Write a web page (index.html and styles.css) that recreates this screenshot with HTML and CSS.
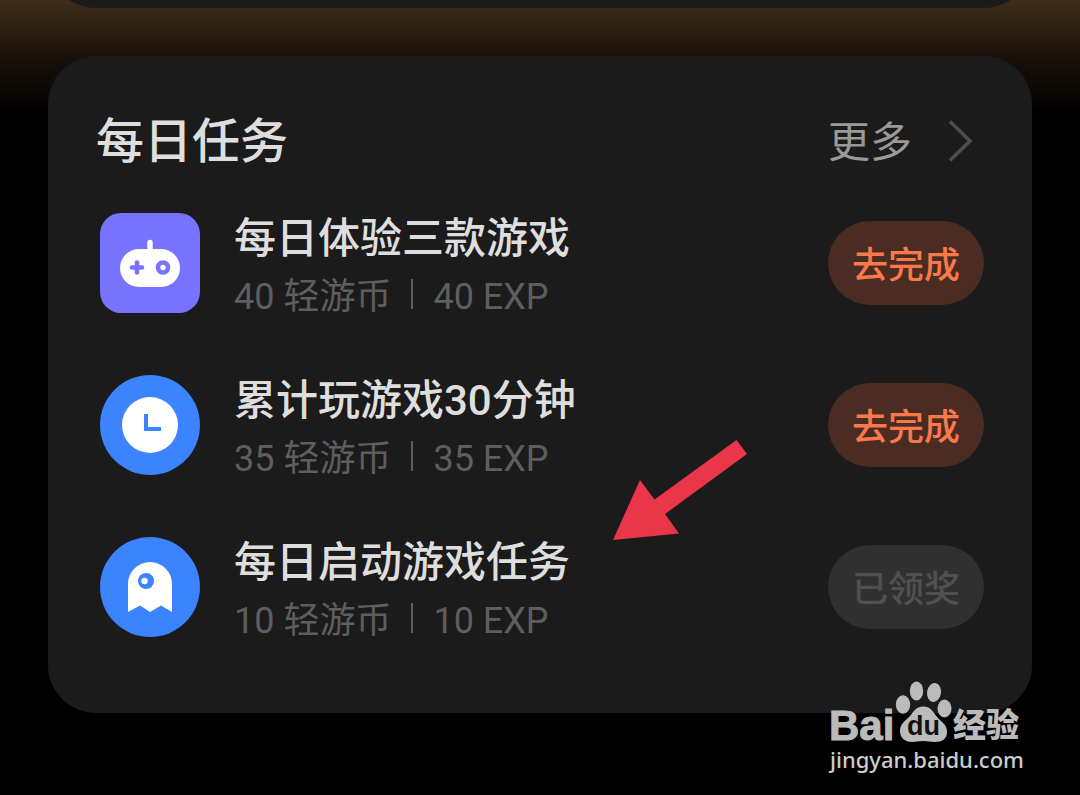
FILE: index.html
```html
<!DOCTYPE html>
<html lang="zh-CN">
<head>
<meta charset="utf-8">
<meta name="viewport" content="width=device-width, initial-scale=1">
<title>每日任务</title>
<link rel="stylesheet" href="styles.css">
</head>
<body>
<div class="page">
  <div class="previous-card"></div>
  <main class="card">
    <header class="card-header">
      <h1 class="card-title">每日任务</h1>
      <a class="more" href="#more">更多
        <svg class="chevron" viewBox="0 0 26 42" aria-hidden="true"><path d="M2 1.500 22 21 2 40.500" fill="none" stroke="#4d4d4d" stroke-width="3.600"/></svg>
      </a>
    </header>
    <ul class="tasks">
      <li class="task">
        <svg class="task-icon" viewBox="0 0 100 100" aria-hidden="true">
          <rect width="100" height="100" rx="21" fill="#7773ff"/>
          <rect x="20" y="36" width="60" height="38" rx="19" fill="#fff"/>
          <path d="M50 29.500V40" stroke="#fff" stroke-width="5.400" stroke-linecap="round"/>
          <path d="M32 54.500H42M37 49.500V59.500" stroke="#7773ff" stroke-width="4.600" stroke-linecap="round"/>
          <circle cx="63" cy="54.500" r="5" fill="none" stroke="#7773ff" stroke-width="4.600"/>
        </svg>
        <div class="task-text">
          <h2 class="task-title">每日体验三款游戏</h2>
          <p class="reward"><span>40 轻游币</span><span class="divider"></span><span>40 EXP</span></p>
        </div>
        <button class="action" type="button">去完成</button>
      </li>
      <li class="task">
        <svg class="task-icon" viewBox="0 0 100 100" aria-hidden="true">
          <circle cx="50" cy="50" r="50" fill="#3c83ff"/>
          <circle cx="50" cy="50" r="28" fill="#fff"/>
          <path d="M46 39V54H61" fill="none" stroke="#3c83ff" stroke-width="4"/>
        </svg>
        <div class="task-text">
          <h2 class="task-title">累计玩游戏30分钟</h2>
          <p class="reward"><span>35 轻游币</span><span class="divider"></span><span>35 EXP</span></p>
        </div>
        <button class="action" type="button">去完成</button>
      </li>
      <li class="task">
        <svg class="task-icon" viewBox="0 0 100 100" aria-hidden="true">
          <circle cx="50" cy="50" r="50" fill="#3c83ff"/>
          <path d="M28 75V47a22 22 0 0 1 44 0V75L61 68.500 50 75 40 68.500Z" fill="#fff"/>
          <circle cx="46" cy="44" r="8" fill="#3c83ff"/>
          <circle cx="44.500" cy="44" r="3.200" fill="#fff"/>
        </svg>
        <div class="task-text">
          <h2 class="task-title">每日启动游戏任务</h2>
          <p class="reward"><span>10 轻游币</span><span class="divider"></span><span>10 EXP</span></p>
        </div>
        <button class="action action-done" type="button" disabled>已领奖</button>
      </li>
    </ul>
  </main>
  <svg class="arrow" viewBox="0 0 134 100" aria-hidden="true"><path d="M0 100 27 40 41.500 59.500 123.500 0 134 14 52 74 66 93.500Z" fill="#ea3649"/></svg>
  <div class="watermark">
    <svg class="watermark-logo" viewBox="0 0 194 64" role="img" aria-label="Baidu 经验">
      <text class="logo-latin" x="-1" y="59">Bai</text>
      <ellipse cx="73" cy="23.500" rx="7.200" ry="9.200"/>
      <ellipse cx="86.500" cy="10" rx="6.700" ry="9.500"/>
      <ellipse cx="104" cy="11.500" rx="7" ry="9.500" transform="rotate(8 104 11.500)"/>
      <ellipse cx="114.500" cy="27.500" rx="7" ry="9"/>
      <path d="M93.500 25.500C101 25.500 103 31 107 36 111 41 117 43 117 51 117 58 112 61 105 61 100 61 98 60 93.500 60 89 60 86 61 82 61 75 61 70 57 70 50 70 43 75 40 79 36 83 32 85 25.500 93.500 25.500Z"/>
      <text class="logo-du" x="77" y="54">du</text>
      <text class="logo-cjk" x="123" y="56">经验</text>
    </svg>
    <span class="watermark-url">jingyan.baidu.com</span>
  </div>
</div>
</body>
</html>
```
FILE: styles.css
```css
* {
  box-sizing: border-box;
}

body {
  margin: 0;
  background: #000;
  color: #dedede;
  font-family: Roboto, "Noto Sans CJK SC", sans-serif;
}

.page {
  position: relative;
  min-height: 100vh;
  padding: 0 48px 82px;
  background: linear-gradient(#402d19 0, #1b120a 56px, #000 112px);
}

.previous-card {
  height: 8px;
  overflow: hidden;
  position: relative;
}

.previous-card::before {
  content: "";
  position: absolute;
  inset: -92px 0 0;
  border-radius: 48px;
  background: #1b1b1b;
}

.card {
  margin-top: 48px;
  padding: 48px 48px 76px;
  border-radius: 48px;
  background: #1b1b1b;
}

.card-header {
  display: flex;
  align-items: center;
  justify-content: space-between;
  height: 76px;
}

.card-title {
  margin: 0;
  font-size: 48px;
  font-weight: 500;
  line-height: 72px;
}

.more {
  display: flex;
  align-items: center;
  gap: 36px;
  padding: 2px 10px 0 0;
  color: #999;
  font-size: 42px;
  line-height: 72px;
  text-decoration: none;
}

.chevron {
  width: 26px;
  height: 42px;
  margin-bottom: 4px;
}

.tasks {
  display: grid;
  gap: 62px;
  margin: 33px 0 0;
  padding: 0 0 0 4px;
  list-style: none;
}

.task {
  display: flex;
  align-items: center;
  height: 100px;
}

.task-icon {
  flex: none;
  width: 100px;
  height: 100px;
}

.task-text {
  flex: 1;
  padding: 8px 0 0 34px;
}

.task-title {
  margin: 0;
  font-size: 42px;
  font-weight: 500;
  line-height: 60px;
}

.reward {
  display: flex;
  align-items: center;
  gap: 20px;
  margin: 0;
  color: #5e5e5e;
  font-size: 36px;
  line-height: 56px;
}

.divider {
  width: 2px;
  height: 30px;
  margin-bottom: 6px;
  background: #5e5e5e;
}

.action {
  width: 156px;
  height: 84px;
  padding: 6px 0 0;
  border: 0;
  border-radius: 42px;
  background: #4a2c22;
  color: #f9794b;
  font: 500 36px/78px Roboto, "Noto Sans CJK SC", sans-serif;
}

.action-done {
  background: #303030;
  color: #505050;
}

.arrow {
  position: absolute;
  top: 440px;
  left: 613px;
  width: 134px;
  height: 100px;
}

.watermark {
  position: absolute;
  right: 56px;
  bottom: 22px;
  width: 194px;
}

.watermark-logo {
  display: block;
  width: 194px;
  height: 64px;
  fill: #bbb;
  overflow: visible;
}

.logo-latin {
  font: 700 42px "Liberation Sans", sans-serif;
  stroke: #bbb;
  stroke-width: 1px;
}

.logo-du {
  fill: #111;
  font: 700 27px "Liberation Sans", sans-serif;
}

.logo-cjk {
  font: 900 33px "Noto Sans CJK SC", sans-serif;
}

.watermark-url {
  display: block;
  color: #ccc;
  font: 500 22px/28px "Noto Sans", sans-serif;
}
```
